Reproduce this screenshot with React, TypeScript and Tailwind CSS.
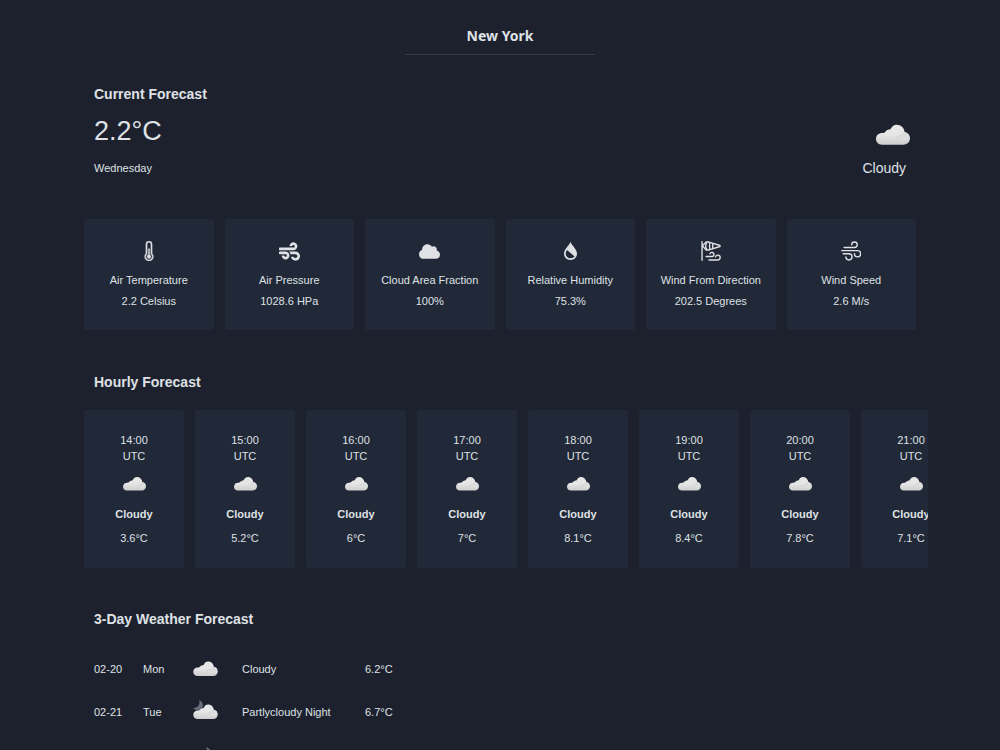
import type { ReactNode } from "react";
import { BsThermometerHalf } from "react-icons/bs";
import { FaCloud, FaWind } from "react-icons/fa";

type Condition = "cloudy" | "partlycloudy_night" | "clearsky_night";

const location = "New York";

const current = {
  temperature: "2.2°C",
  day: "Wednesday",
  summary: "Cloudy",
};

const metrics: { label: string; value: string; icon: ReactNode }[] = [
  {
    label: "Air Temperature",
    value: "2.2 Celsius",
    icon: <BsThermometerHalf className="size-5" stroke="currentColor" strokeWidth="0.3" />,
  },
  { label: "Air Pressure", value: "1028.6 HPa", icon: <FaWind className="size-[21px]" /> },
  { label: "Cloud Area Fraction", value: "100%", icon: <FaCloud className="size-[21px]" /> },
  { label: "Relative Humidity", value: "75.3%", icon: <HumidityIcon /> },
  { label: "Wind From Direction", value: "202.5 Degrees", icon: <WindsockIcon /> },
  { label: "Wind Speed", value: "2.6 M/s", icon: <WindSpeedIcon /> },
];

const hourly = [
  { time: "14:00", temperature: "3.6°C" },
  { time: "15:00", temperature: "5.2°C" },
  { time: "16:00", temperature: "6°C" },
  { time: "17:00", temperature: "7°C" },
  { time: "18:00", temperature: "8.1°C" },
  { time: "19:00", temperature: "8.4°C" },
  { time: "20:00", temperature: "7.8°C" },
  { time: "21:00", temperature: "7.1°C" },
];

const daily: { date: string; day: string; condition: Condition; summary: string; temperature: string }[] = [
  { date: "02-20", day: "Mon", condition: "cloudy", summary: "Cloudy", temperature: "6.2°C" },
  {
    date: "02-21",
    day: "Tue",
    condition: "partlycloudy_night",
    summary: "Partlycloudy Night",
    temperature: "6.7°C",
  },
  {
    date: "02-22",
    day: "Wed",
    condition: "clearsky_night",
    summary: "Clearsky Night",
    temperature: "5.4°C",
  },
];

export default function App() {
  return (
    <main className="h-screen overflow-y-auto bg-[#1d212d] pr-[72px] pl-[84px] font-['Liberation_Sans',Arial,sans-serif] text-[11px] leading-4 text-[#dfe1e5] [scrollbar-width:none]">
      <header className="mr-3 flex justify-center pt-6">
        <h1 className="w-[190px] border-b border-[#373b47] pb-[6px] text-center font-['Noto_Sans',sans-serif] text-sm leading-6 font-bold">
          {location}
        </h1>
      </header>

      <section className="mt-[29px] mr-[18px] ml-[10px] flex items-end justify-between">
        <div>
          <SectionTitle>Current Forecast</SectionTitle>
          <p className="mt-[9px] text-[27px] leading-9">{current.temperature}</p>
          <p className="mt-[11px] pb-2">{current.day}</p>
        </div>
        <div className="flex flex-col items-end">
          <WeatherIcon condition="cloudy" className="h-9 w-[34px]" />
          <p className="mt-[5px] pr-1 pb-[6px] text-sm leading-5">{current.summary}</p>
        </div>
      </section>

      <ul className="mt-[35px] mr-3 grid grid-cols-6 gap-[11px]">
        {metrics.map((metric) => (
          <li
            key={metric.label}
            className="flex flex-col items-center rounded-xs bg-[#212837] pt-5 pb-[21px]"
          >
            <span className="flex h-6 items-center">{metric.icon}</span>
            <span className="mt-[9px] whitespace-nowrap">{metric.label}</span>
            <span className="mt-[5px]">{metric.value}</span>
          </li>
        ))}
      </ul>

      <section className="mt-[42px]">
        <SectionTitle className="ml-[10px]">Hourly Forecast</SectionTitle>
        <ul className="mt-[18px] flex gap-[11px] overflow-x-auto [scrollbar-width:none]">
          {hourly.map((hour) => (
            <li
              key={hour.time}
              className="flex w-[100px] shrink-0 flex-col items-center rounded-xs bg-[#212837] pt-[22px] pb-[21px]"
            >
              <span>{hour.time}</span>
              <span>UTC</span>
              <WeatherIcon condition="cloudy" className="mt-2 h-6 w-[23px]" />
              <strong className="mt-[10px]">Cloudy</strong>
              <span className="mt-2 pb-px">{hour.temperature}</span>
            </li>
          ))}
        </ul>
      </section>

      <section className="mt-[41px] ml-[10px]">
        <SectionTitle>3-Day Weather Forecast</SectionTitle>
        <table className="mt-[18px] w-[310px] table-fixed">
          <tbody>
            {daily.map((row) => (
              <tr key={row.date} className="h-[43px]">
                <td className="w-[49px]">{row.date}</td>
                <td className="w-[50px]">{row.day}</td>
                <td className="w-[49px]">
                  <WeatherIcon condition={row.condition} className="h-6 w-[25px]" />
                </td>
                <td>{row.summary}</td>
                <td className="w-[39px]">{row.temperature}</td>
              </tr>
            ))}
          </tbody>
        </table>
      </section>
    </main>
  );
}

function SectionTitle({ children, className = "" }: { children: ReactNode; className?: string }) {
  return <h2 className={`text-sm leading-5 font-bold ${className}`}>{children}</h2>;
}

function WeatherIcon({ condition, className }: { condition: Condition; className: string }) {
  return (
    <svg viewBox="0 0 102 100" className={`overflow-visible ${className}`} aria-hidden="true">
      <defs>
        <linearGradient id="cloud-body" x1="0" y1="0" x2="0" y2="1">
          <stop offset="0.5" stopColor="#e6e6e6" />
          <stop offset="1" stopColor="#cdcdcd" />
        </linearGradient>
        <linearGradient id="cloud-shade" x1="0" y1="0" x2="1" y2="1">
          <stop offset="0" stopColor="#cfcfcf" />
          <stop offset="0.7" stopColor="#dedede" />
        </linearGradient>
      </defs>
      {condition === "partlycloudy_night" && (
        <path d="M25 0c18 9 20 28 8 37-12 8-25 5-35-4 21 1 31-13 27-33z" fill="#686c78" />
      )}
      {condition === "clearsky_night" ? (
        <path d="M54 16c26 12 32 44 14 60-16 13-40 13-54 0 34 2 50-28 40-60z" fill="#686c78" />
      ) : (
        <>
          <path
            d="M18 79C7 79 0 71 0 62c0-11 8-18 19-18 4 0 7-1 9-4 4-5 9-6 15-7 5-9 10-14 19-14 13 0 22 9 24 22 10 2 16 9 16 19 0 11-8 19-19 19z"
            fill="url(#cloud-body)"
          />
          <path d="M50 57c12-2 22-7 34-15 11 2 16 9 16 18-8 9-20 6-30 2-7-3-13-4-20-5z" fill="url(#cloud-shade)" />
        </>
      )}
    </svg>
  );
}

function HumidityIcon() {
  return (
    <svg viewBox="0 0 38 52" className="h-[18px] w-[13px]" fill="currentColor" aria-hidden="true">
      <path
        fillRule="evenodd"
        d="M19 0c4 10 19 21 19 34 0 10-8 18-19 18S0 44 0 34C0 21 15 10 19 0zM9 23c-2 3-4 7-4 11 0 8 6 13 14 13 5 0 9-2 12-5z"
      />
    </svg>
  );
}

function WindsockIcon() {
  return (
    <svg
      viewBox="0 0 58 58"
      className="size-5"
      fill="none"
      stroke="currentColor"
      strokeWidth="4"
      strokeLinecap="round"
      strokeLinejoin="round"
      aria-hidden="true"
    >
      <path d="M3 2v54" />
      <path d="M4 14L15 3h8l32 10v3L23 26h-8z" />
      <path d="M17 4c-4 6-4 15 0 21M25 5v20M34 8v14" />
      <path d="M15 45h16a6 6 0 1 0-5-8" />
      <path d="M23 55h25a7 7 0 1 0-6-9" />
    </svg>
  );
}

function WindSpeedIcon() {
  return (
    <svg
      viewBox="0 0 58 58"
      className="size-5"
      fill="none"
      stroke="currentColor"
      strokeWidth="4"
      strokeLinecap="round"
      aria-hidden="true"
    >
      <path d="M9 19h30a8 8 0 1 0-8-8" />
      <path d="M2 28h46a9 9 0 1 1-9 9" />
      <path d="M6 37h17a9 9 0 1 1-9 9" />
    </svg>
  );
}
